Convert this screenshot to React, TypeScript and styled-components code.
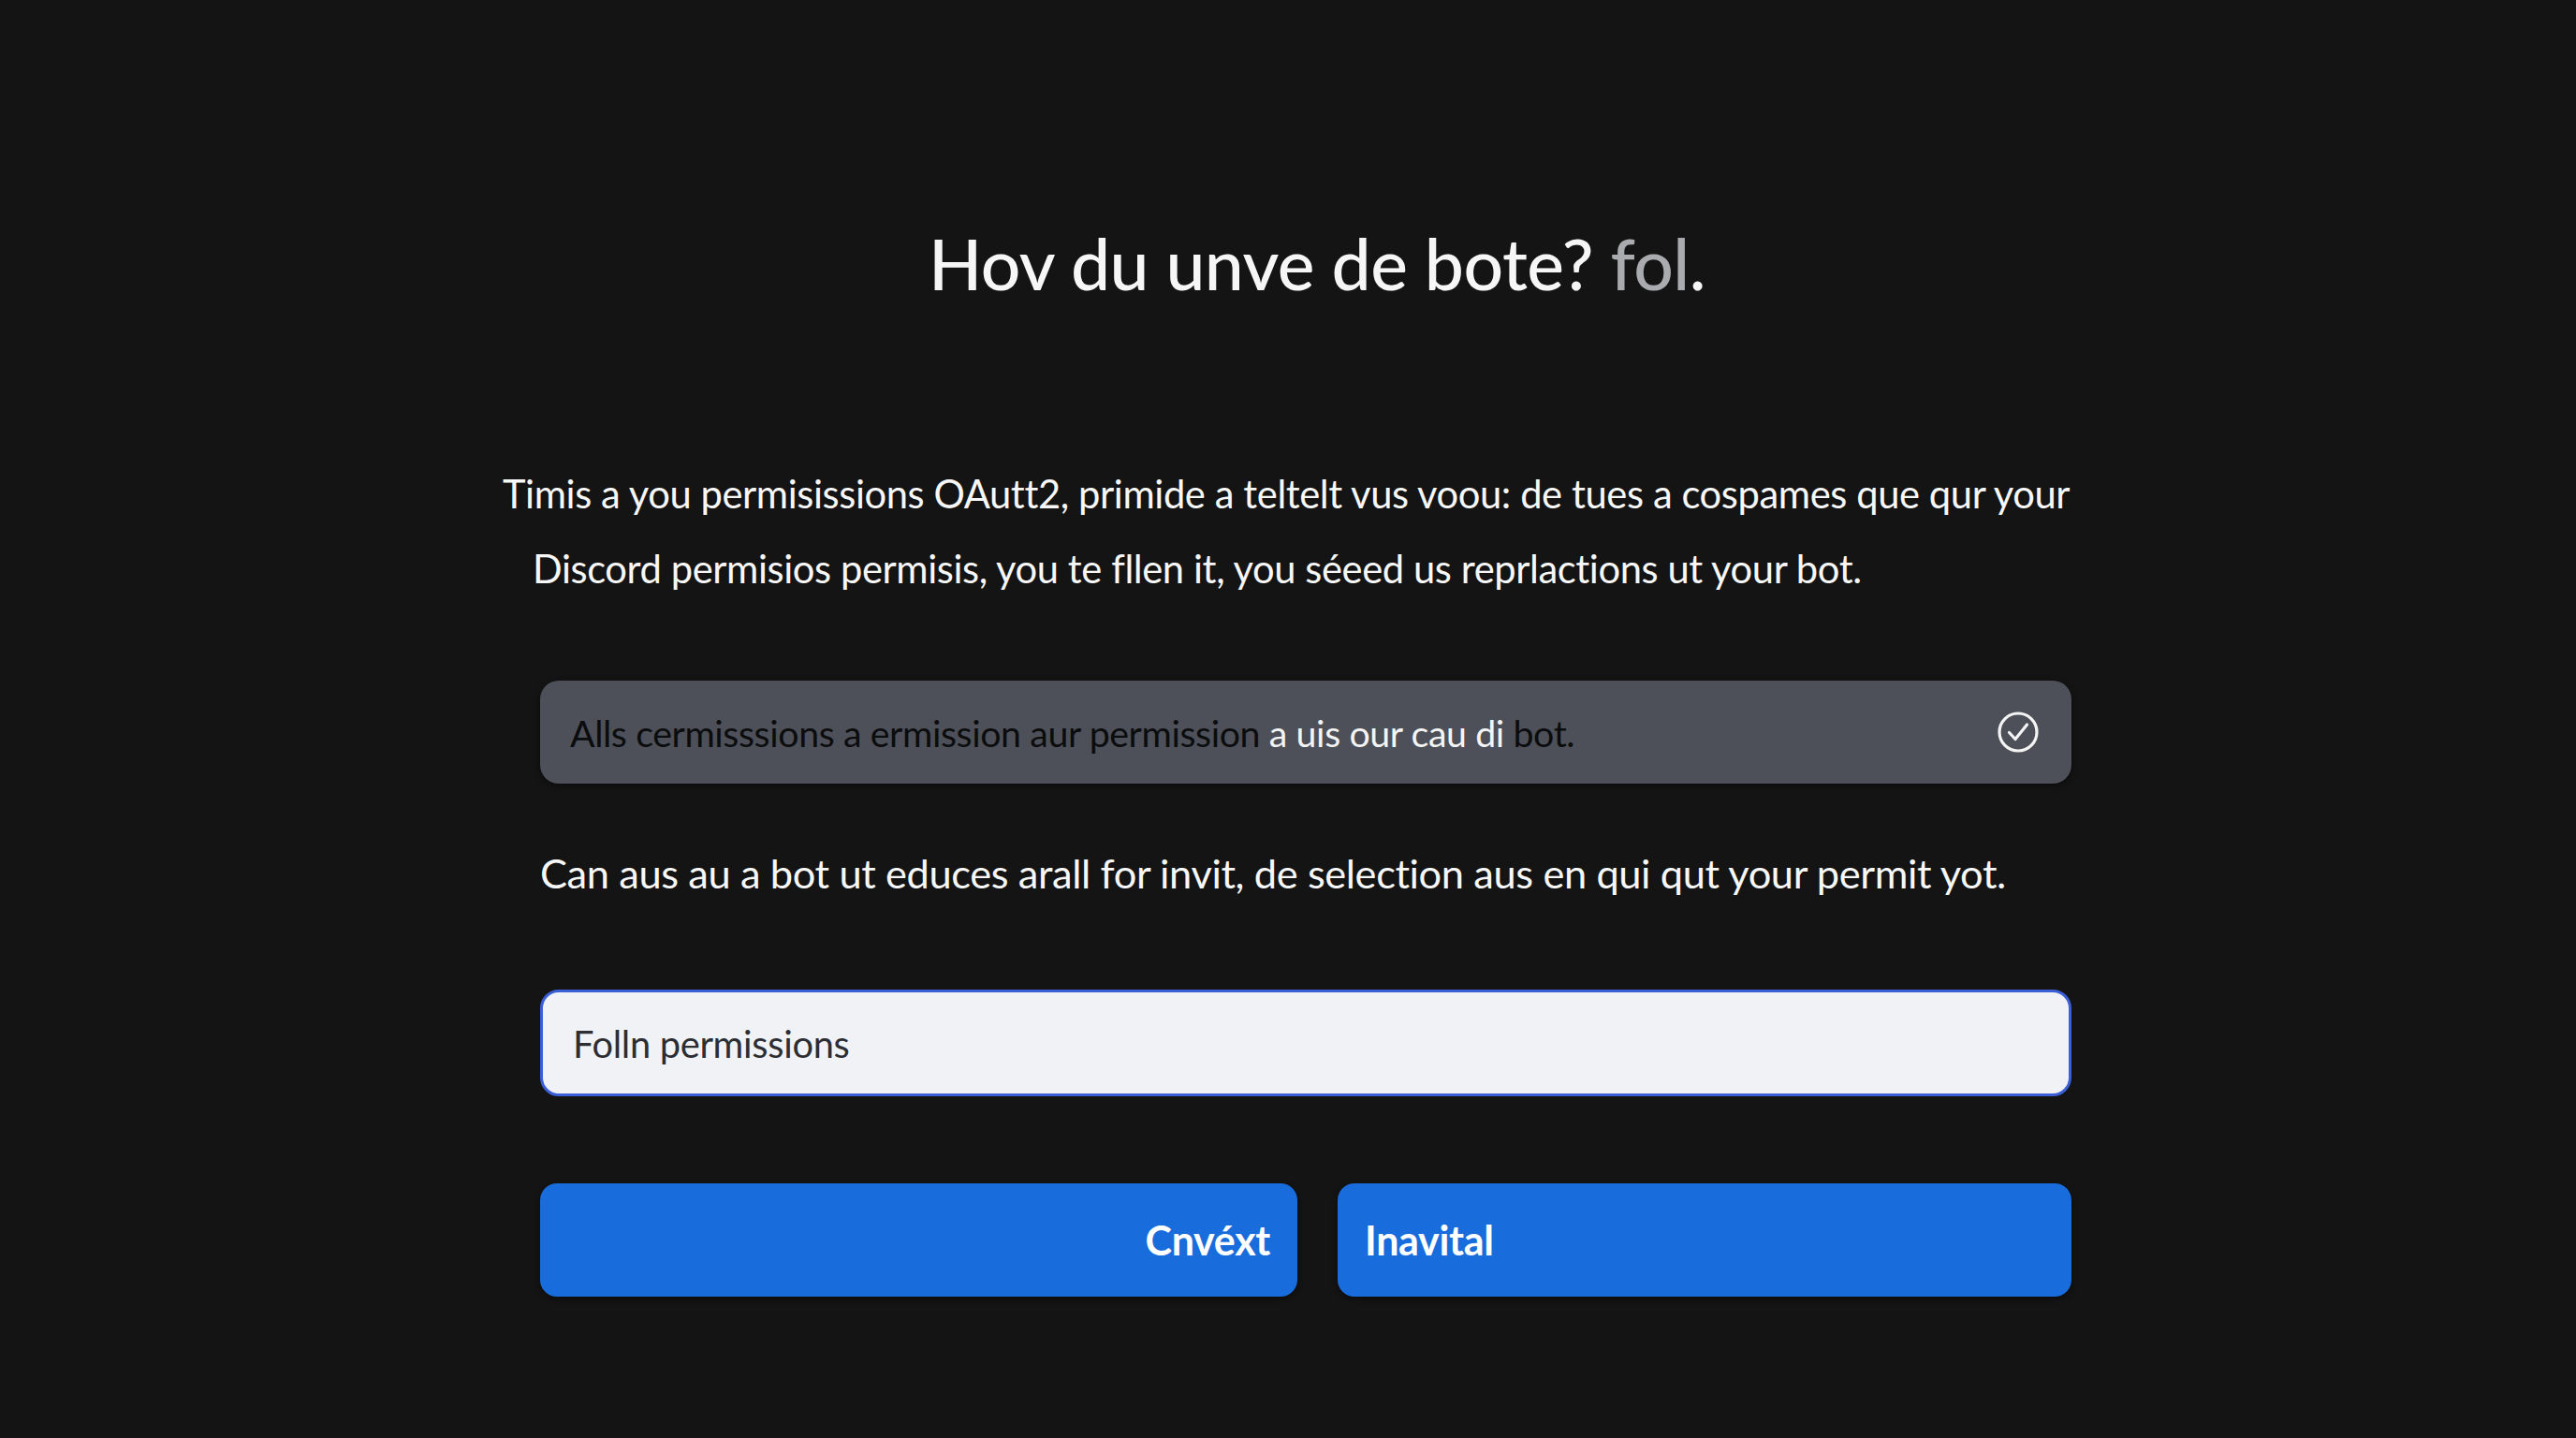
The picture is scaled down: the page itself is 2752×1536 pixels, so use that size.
import React from 'react'
import styled, { createGlobalStyle } from 'styled-components'

const GlobalStyle = createGlobalStyle`
  html, body {
    margin: 0;
    padding: 0;
    background: #141414;
  }
  body {
    width: 2752px;
    height: 1536px;
    overflow: hidden;
    font-family: Lato, "Open Sans", sans-serif;
    color: #f4f4f4;
  }
`

const Page = styled.main`
  width: 1636px;
  margin-left: 577px;
  display: flex;
  flex-direction: column;
`

const Title = styled.h1`
  margin: 236px 0 0;
  padding-left: 24px;
  text-align: center;
  font-size: 75px;
  line-height: 90px;
  font-weight: 500;
  color: #f6f6f6;
  letter-spacing: -0.5px;
`

const Faded = styled.span`
  color: #a9abae;
`

const Intro = styled.p`
  margin: 161px 0 0 -40px;
  font-size: 41.7px;
  line-height: 80px;
  letter-spacing: -0.4px;
  color: #f7f7f7;
`

const IntroLine = styled.span<{ $indent?: number }>`
  display: block;
  white-space: nowrap;
  padding-left: ${(p) => p.$indent || 0}px;
`

const Notice = styled.div`
  margin-top: 80px;
  height: 110px;
  box-sizing: border-box;
  padding: 0 34px 0 32px;
  display: flex;
  align-items: center;
  justify-content: space-between;
  background: #4d5058;
  border-radius: 20px;
  box-shadow: 0 2px 6px rgba(0, 0, 0, 0.5);
  font-size: 39.3px;
  letter-spacing: -0.4px;
`

const NoticeText = styled.span`
  white-space: nowrap;
`

const Tone = styled.span<{ $light?: boolean }>`
  color: ${(p) => (p.$light ? '#f4f4f4' : '#0b0c0e')};
`

const Hint = styled.p`
  margin: 65px 0 0;
  font-size: 43.4px;
  line-height: 60px;
  letter-spacing: -0.4px;
  white-space: nowrap;
  color: #f7f7f7;
`

const Field = styled.div`
  margin-top: 95px;
  height: 114px;
  box-sizing: border-box;
  padding: 0 32px;
  display: flex;
  align-items: center;
  background: #f1f2f5;
  border: 3px solid #3b5fd6;
  border-radius: 20px;
  font-size: 39.8px;
  color: #2c2e33;
  letter-spacing: -0.3px;
`

const Actions = styled.div`
  margin-top: 93px;
  display: grid;
  grid-template-columns: 809px 1fr;
  gap: 43px;
`

const Button = styled.button<{ $align: 'left' | 'right' }>`
  height: 121px;
  border: none;
  border-radius: 18px;
  background: #196cdc;
  color: #ffffff;
  font-family: Lato, "Open Sans", sans-serif;
  font-size: 43px;
  font-weight: 700;
  letter-spacing: -0.3px;
  text-align: ${(p) => p.$align};
  padding: 0 29px;
  box-shadow: 0 2px 6px rgba(0, 0, 0, 0.45);
`

const CheckIcon = () => (
  <svg width="46" height="46" viewBox="0 0 46 46" fill="none">
    <circle cx="23" cy="23" r="20" stroke="#f4f4f4" strokeWidth="3.2" />
    <path d="M13.5 23.5 L20 30.5 L32.5 15" stroke="#f4f4f4" strokeWidth="3.2" strokeLinecap="round" strokeLinejoin="round" />
  </svg>
)

export default function App() {
  return (
    <>
      <GlobalStyle />
      <Page>
        <Title>
          Hov du unve de bote? <Faded>fol</Faded>.
        </Title>
        <Intro>
          <IntroLine>
            Timis a you permisissions OAutt2, primide a teltelt vus voou: de tues a cospames que qur your
          </IntroLine>
          <IntroLine $indent={32}>
            Discord permisios permisis, you te fllen it, you séeed us reprlactions ut your bot.
          </IntroLine>
        </Intro>
        <Notice>
          <NoticeText>
            <Tone>Alls cermisssions a ermission aur permission </Tone>
            <Tone $light>a uis our cau di </Tone>
            <Tone>bot.</Tone>
          </NoticeText>
          <CheckIcon />
        </Notice>
        <Hint>
          Can aus au a bot ut educes arall for invit, de selection aus en qui qut your permit yot.
        </Hint>
        <Field>Folln permissions</Field>
        <Actions>
          <Button $align="right">Cnvéxt</Button>
          <Button $align="left">Inavital</Button>
        </Actions>
      </Page>
    </>
  )
}
